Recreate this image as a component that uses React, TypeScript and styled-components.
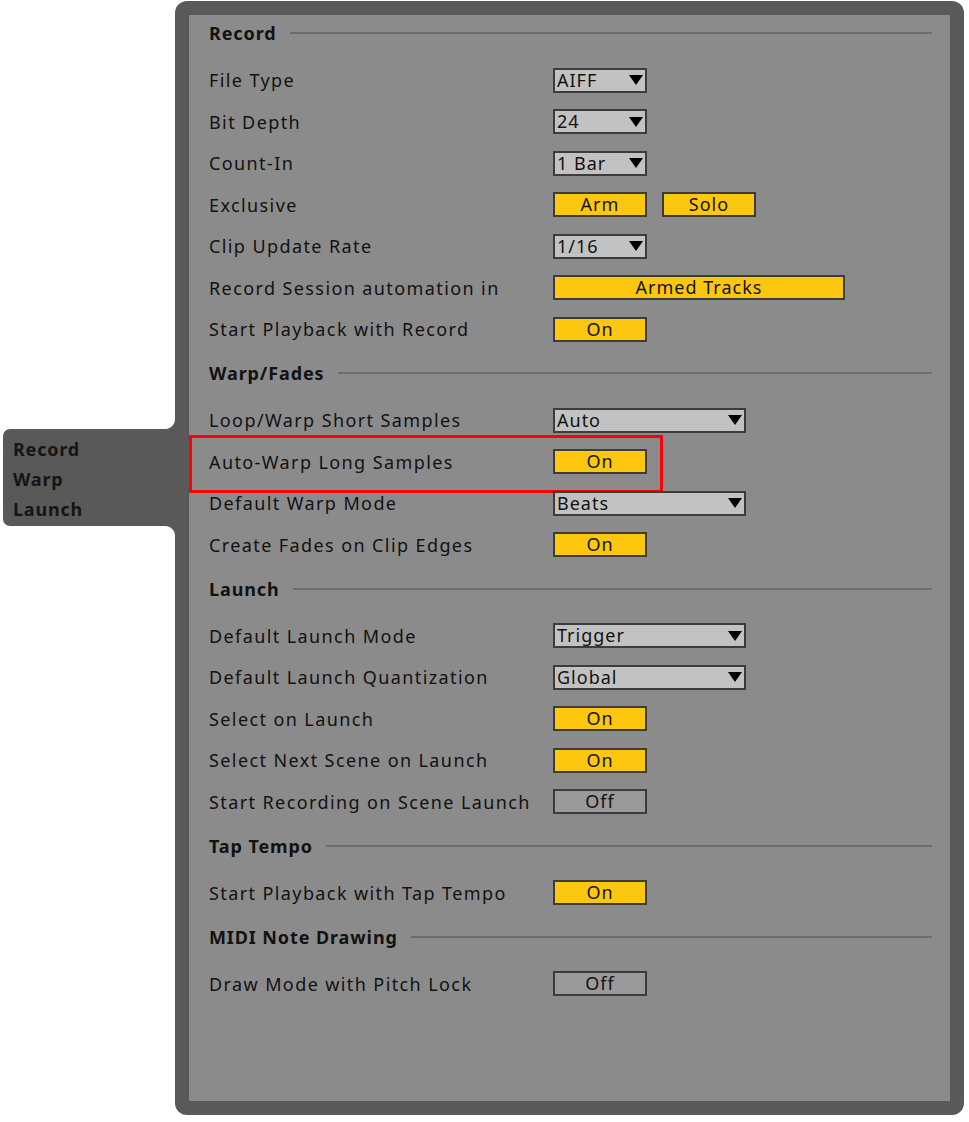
import React from "react";
import styled, { createGlobalStyle, css } from "styled-components";

const FRAME = "#595959";
const PANEL = "#8b8b8b";
const YELLOW = "#fdc70f";
const INK = "#121212";

const Global = createGlobalStyle`
  html, body { margin: 0; padding: 0; background: #ffffff; }
  body { font-family: "Noto Sans", "Open Sans", sans-serif; color: ${INK}; }
  * { box-sizing: border-box; }
`;

const Page = styled.div`
  display: flex;
  align-items: flex-start;
  padding: 1px 0 0 3px;
  width: 969px;
  height: 1122px;
`;

const Tab = styled.nav`
  position: relative;
  margin-top: 428px;
  width: 172px;
  height: 97px;
  background: ${FRAME};
  border-radius: 7px 0 0 7px;
  padding: 5px 0 0 10px;
  display: flex;
  flex-direction: column;
  &::before, &::after {
    content: "";
    position: absolute;
    right: 0;
    width: 10px;
    height: 10px;
  }
  &::before {
    top: -10px;
    background: radial-gradient(circle at 0 0, transparent 9.5px, ${FRAME} 10.5px);
  }
  &::after {
    bottom: -10px;
    background: radial-gradient(circle at 0 100%, transparent 9.5px, ${FRAME} 10.5px);
  }
`;

const TabItem = styled.div`
  font-size: 18px;
  font-weight: 700;
  line-height: 30px;
  letter-spacing: 0.8px;
  color: #151515;
`;

const Frame = styled.div`
  width: 789px;
  height: 1114px;
  background: ${FRAME};
  border-radius: 12px;
  padding: 14px;
`;

const Panel = styled.div`
  height: 100%;
  background: ${PANEL};
  padding: 0 18px 0 20px;
  display: flex;
  flex-direction: column;
`;

const Section = styled.section`
  display: flex;
  flex-direction: column;
  & + & { margin-top: 5.25px; }
`;

const Header = styled.div`
  height: 36px;
  display: flex;
  align-items: center;
  gap: 13px;
  margin-bottom: 8.25px;
  font-size: 18px;
  font-weight: 700;
  letter-spacing: 0.9px;
  &::after {
    content: "";
    flex: 1;
    height: 2px;
    background: #6c6c6c;
  }
`;

const Row = styled.div<{ $highlight?: boolean }>`
  position: relative;
  height: 41.5px;
  display: flex;
  align-items: center;
  ${(p) =>
    p.$highlight &&
    css`
      &::after {
        content: "";
        position: absolute;
        left: -20px;
        top: -5.75px;
        width: 468px;
        height: 52px;
        border: 3.5px solid #ff0000;
      }
    `}
`;

const Label = styled.div`
  width: 344px;
  font-size: 18px;
  letter-spacing: 1.4px;
  white-space: nowrap;
`;

const Controls = styled.div`
  display: flex;
  gap: 15px;
`;

const Box = styled.div<{ $w: number }>`
  width: ${(p) => p.$w}px;
  height: 25px;
  border: 2px solid #3c3c3c;
  font-size: 18px;
  line-height: 21px;
  letter-spacing: 1px;
  white-space: nowrap;
`;

const Select = styled(Box)`
  background: #c2c2c2;
  display: flex;
  align-items: center;
  justify-content: space-between;
  padding: 0 2px 0 2px;
`;

const Arrow = styled.svg`
  width: 14px;
  height: 10px;
`;

const Toggle = styled(Box)<{ $on?: boolean }>`
  background: ${(p) => (p.$on ? YELLOW : "#9a9a9a")};
  text-align: center;
`;

type Ctl =
  | { kind: "select"; value: string; w: number }
  | { kind: "toggle"; value: string; on: boolean; w: number };

type RowDef = { label: string; controls: Ctl[]; highlight?: boolean };
type SectionDef = { title: string; rows: RowDef[] };

const sel = (value: string, w = 94): Ctl => ({ kind: "select", value, w });
const tog = (value: string, on = true, w = 94): Ctl => ({ kind: "toggle", value, on, w });

const sections: SectionDef[] = [
  {
    title: "Record",
    rows: [
      { label: "File Type", controls: [sel("AIFF")] },
      { label: "Bit Depth", controls: [sel("24")] },
      { label: "Count-In", controls: [sel("1 Bar")] },
      { label: "Exclusive", controls: [tog("Arm"), tog("Solo")] },
      { label: "Clip Update Rate", controls: [sel("1/16")] },
      { label: "Record Session automation in", controls: [tog("Armed Tracks", true, 292)] },
      { label: "Start Playback with Record", controls: [tog("On")] },
    ],
  },
  {
    title: "Warp/Fades",
    rows: [
      { label: "Loop/Warp Short Samples", controls: [sel("Auto", 193)] },
      { label: "Auto-Warp Long Samples", controls: [tog("On")], highlight: true },
      { label: "Default Warp Mode", controls: [sel("Beats", 193)] },
      { label: "Create Fades on Clip Edges", controls: [tog("On")] },
    ],
  },
  {
    title: "Launch",
    rows: [
      { label: "Default Launch Mode", controls: [sel("Trigger", 193)] },
      { label: "Default Launch Quantization", controls: [sel("Global", 193)] },
      { label: "Select on Launch", controls: [tog("On")] },
      { label: "Select Next Scene on Launch", controls: [tog("On")] },
      { label: "Start Recording on Scene Launch", controls: [tog("Off", false)] },
    ],
  },
  {
    title: "Tap Tempo",
    rows: [{ label: "Start Playback with Tap Tempo", controls: [tog("On")] }],
  },
  {
    title: "MIDI Note Drawing",
    rows: [{ label: "Draw Mode with Pitch Lock", controls: [tog("Off", false)] }],
  },
];

function Control({ c }: { c: Ctl }) {
  if (c.kind === "select") {
    return (
      <Select $w={c.w}>
        <span>{c.value}</span>
        <Arrow viewBox="0 0 14 10">
          <path d="M0 0 H14 L7 10 Z" fill="#000" />
        </Arrow>
      </Select>
    );
  }
  return (
    <Toggle $w={c.w} $on={c.on}>
      {c.value}
    </Toggle>
  );
}

export default function App() {
  return (
    <>
      <Global />
      <Page>
        <Tab>
          <TabItem>Record</TabItem>
          <TabItem>Warp</TabItem>
          <TabItem>Launch</TabItem>
        </Tab>
        <Frame>
          <Panel>
            {sections.map((s) => (
              <Section key={s.title}>
                <Header>{s.title}</Header>
                {s.rows.map((r) => (
                  <Row key={r.label} $highlight={r.highlight}>
                    <Label>{r.label}</Label>
                    <Controls>
                      {r.controls.map((c, i) => (
                        <Control key={i} c={c} />
                      ))}
                    </Controls>
                  </Row>
                ))}
              </Section>
            ))}
          </Panel>
        </Frame>
      </Page>
    </>
  );
}
